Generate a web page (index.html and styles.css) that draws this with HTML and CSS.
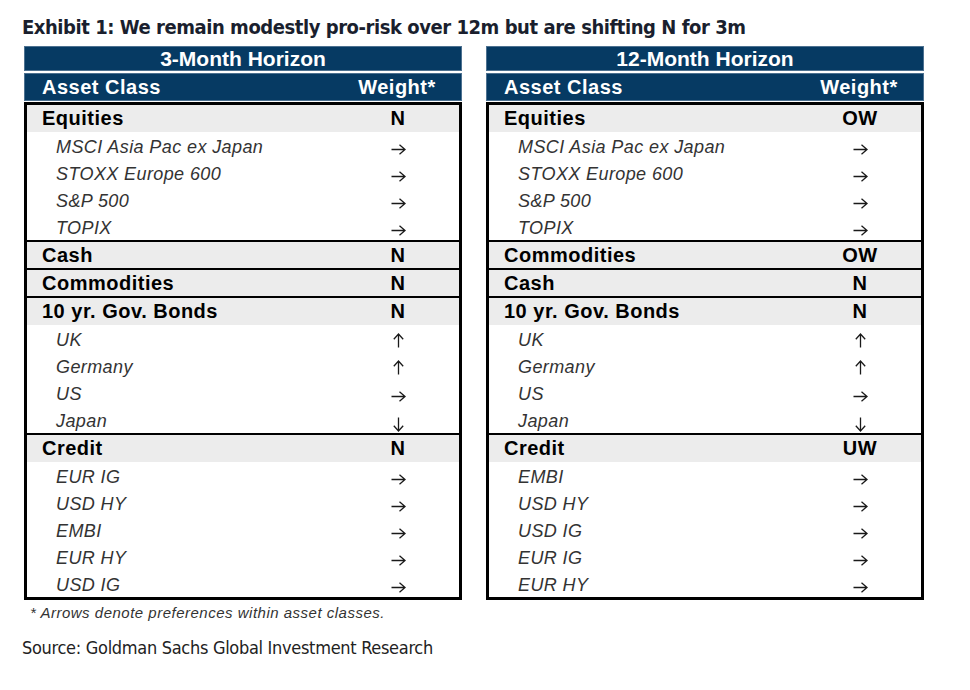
FILE: index.html
```html
<!DOCTYPE html>
<html lang="en">
<head>
<meta charset="utf-8">
<title>Exhibit 1</title>
<link rel="stylesheet" href="styles.css">
</head>
<body>
<svg class="defs" width="0" height="0" aria-hidden="true">
  <defs>
    <symbol id="ar" viewBox="0 0 15 11"><path d="M0.5 5.5H14M8.5 0.8L14 5.5L8.5 10.2" fill="none" stroke="#1a1a1a" stroke-width="1.3"/></symbol>
    <symbol id="au" viewBox="0 0 15 15"><path d="M7.5 14.5V1M2.8 6.2L7.5 1L12.2 6.2" fill="none" stroke="#1a1a1a" stroke-width="1.3"/></symbol>
    <symbol id="ad" viewBox="0 0 15 15"><path d="M7.5 0.5V14M2.8 8.8L7.5 14L12.2 8.8" fill="none" stroke="#1a1a1a" stroke-width="1.3"/></symbol>
  </defs>
</svg>
<div class="page">
  <h1 class="title">Exhibit 1: We remain modestly pro-risk over 12m but are shifting N for 3m</h1>
  <div class="tables">
    <section class="panel">
      <div class="horizon">3-Month Horizon</div>
      <div class="colhead"><span class="name">Asset Class</span><span class="w">Weight*</span></div>
      <div class="body">
        <div class="group">
          <div class="row head"><span class="name">Equities</span><span class="w">N</span></div>
          <div class="row sub"><span class="name">MSCI Asia Pac ex Japan</span><span class="w"><svg class="arr h"><use href="#ar"/></svg></span></div>
          <div class="row sub"><span class="name">STOXX Europe 600</span><span class="w"><svg class="arr h"><use href="#ar"/></svg></span></div>
          <div class="row sub"><span class="name">S&amp;P 500</span><span class="w"><svg class="arr h"><use href="#ar"/></svg></span></div>
          <div class="row sub"><span class="name">TOPIX</span><span class="w"><svg class="arr h"><use href="#ar"/></svg></span></div>
        </div>
        <div class="group">
          <div class="row head single"><span class="name">Cash</span><span class="w">N</span></div>
        </div>
        <div class="group">
          <div class="row head single"><span class="name">Commodities</span><span class="w">N</span></div>
        </div>
        <div class="group">
          <div class="row head"><span class="name">10 yr. Gov. Bonds</span><span class="w">N</span></div>
          <div class="row sub"><span class="name">UK</span><span class="w"><svg class="arr v"><use href="#au"/></svg></span></div>
          <div class="row sub"><span class="name">Germany</span><span class="w"><svg class="arr v"><use href="#au"/></svg></span></div>
          <div class="row sub"><span class="name">US</span><span class="w"><svg class="arr h"><use href="#ar"/></svg></span></div>
          <div class="row sub"><span class="name">Japan</span><span class="w"><svg class="arr v down"><use href="#ad"/></svg></span></div>
        </div>
        <div class="group">
          <div class="row head"><span class="name">Credit</span><span class="w">N</span></div>
          <div class="row sub"><span class="name">EUR IG</span><span class="w"><svg class="arr h"><use href="#ar"/></svg></span></div>
          <div class="row sub"><span class="name">USD HY</span><span class="w"><svg class="arr h"><use href="#ar"/></svg></span></div>
          <div class="row sub"><span class="name">EMBI</span><span class="w"><svg class="arr h"><use href="#ar"/></svg></span></div>
          <div class="row sub"><span class="name">EUR HY</span><span class="w"><svg class="arr h"><use href="#ar"/></svg></span></div>
          <div class="row sub"><span class="name">USD IG</span><span class="w"><svg class="arr h"><use href="#ar"/></svg></span></div>
        </div>
      </div>
      <p class="note">* Arrows denote preferences within asset classes.</p>
    </section>
    <section class="panel">
      <div class="horizon">12-Month Horizon</div>
      <div class="colhead"><span class="name">Asset Class</span><span class="w">Weight*</span></div>
      <div class="body">
        <div class="group">
          <div class="row head"><span class="name">Equities</span><span class="w">OW</span></div>
          <div class="row sub"><span class="name">MSCI Asia Pac ex Japan</span><span class="w"><svg class="arr h"><use href="#ar"/></svg></span></div>
          <div class="row sub"><span class="name">STOXX Europe 600</span><span class="w"><svg class="arr h"><use href="#ar"/></svg></span></div>
          <div class="row sub"><span class="name">S&amp;P 500</span><span class="w"><svg class="arr h"><use href="#ar"/></svg></span></div>
          <div class="row sub"><span class="name">TOPIX</span><span class="w"><svg class="arr h"><use href="#ar"/></svg></span></div>
        </div>
        <div class="group">
          <div class="row head single"><span class="name">Commodities</span><span class="w">OW</span></div>
        </div>
        <div class="group">
          <div class="row head single"><span class="name">Cash</span><span class="w">N</span></div>
        </div>
        <div class="group">
          <div class="row head"><span class="name">10 yr. Gov. Bonds</span><span class="w">N</span></div>
          <div class="row sub"><span class="name">UK</span><span class="w"><svg class="arr v"><use href="#au"/></svg></span></div>
          <div class="row sub"><span class="name">Germany</span><span class="w"><svg class="arr v"><use href="#au"/></svg></span></div>
          <div class="row sub"><span class="name">US</span><span class="w"><svg class="arr h"><use href="#ar"/></svg></span></div>
          <div class="row sub"><span class="name">Japan</span><span class="w"><svg class="arr v down"><use href="#ad"/></svg></span></div>
        </div>
        <div class="group">
          <div class="row head"><span class="name">Credit</span><span class="w">UW</span></div>
          <div class="row sub"><span class="name">EMBI</span><span class="w"><svg class="arr h"><use href="#ar"/></svg></span></div>
          <div class="row sub"><span class="name">USD HY</span><span class="w"><svg class="arr h"><use href="#ar"/></svg></span></div>
          <div class="row sub"><span class="name">USD IG</span><span class="w"><svg class="arr h"><use href="#ar"/></svg></span></div>
          <div class="row sub"><span class="name">EUR IG</span><span class="w"><svg class="arr h"><use href="#ar"/></svg></span></div>
          <div class="row sub"><span class="name">EUR HY</span><span class="w"><svg class="arr h"><use href="#ar"/></svg></span></div>
        </div>
      </div>
    </section>
  </div>
  <p class="source">Source: Goldman Sachs Global Investment Research</p>
</div>
</body>
</html>
```

FILE: styles.css
```css
* { box-sizing: border-box; }
html, body { margin: 0; padding: 0; background: #fff; }

.defs { position: absolute; width: 0; height: 0; overflow: hidden; }

.page {
  width: 970px;
  height: 690px;
  padding: 14px 0 0 22px;
  display: flex;
  flex-direction: column;
  font-family: "Liberation Sans", Arial, sans-serif;
}

.title {
  margin: 0 0 6px 0;
  font-family: "DejaVu Sans Condensed", sans-serif;
  font-weight: bold;
  font-size: 20px;
  letter-spacing: -0.45px;
  line-height: 26px;
  color: #1a1f2e;
  white-space: nowrap;
}

.tables {
  display: flex;
  gap: 24px;
  align-items: flex-start;
  padding-left: 2px;
}

.panel {
  width: 438px;
  display: flex;
  flex-direction: column;
}

.horizon {
  height: 25px;
  background: #063a63;
  border: 1px solid #4d7190;
  color: #fff;
  font-weight: bold;
  font-size: 21px;
  line-height: 23px;
  text-align: center;
  margin-bottom: 2px;
}

.colhead {
  height: 28px;
  background: #063a63;
  border: 1px solid #4d7190;
  color: #fff;
  font-weight: bold;
  font-size: 20px;
  letter-spacing: 0.5px;
  display: flex;
  align-items: center;
  margin-bottom: 1px;
}
.colhead .name { flex: 1; padding-left: 17px; }
.colhead .w { width: 128px; text-align: center; }

.body {
  border: 3px solid #000;
}

.group + .group { border-top: 2px solid #000; }

.row {
  display: flex;
  align-items: center;
  height: 27px;
}
.row .name { flex: 1; }
.row .w {
  width: 122px;
  display: flex;
  justify-content: center;
}

.row.head {
  background: #ececec;
  font-weight: bold;
  font-size: 20px;
  letter-spacing: 0.5px;
  color: #000;
}
.row.head .name { padding-left: 15px; }
.row.single { height: 26px; }

.row.sub {
  font-size: 18px;
  color: #333;
  padding-top: 3px;
}
.row.sub .name {
  font-style: italic;
  letter-spacing: 0.4px;
  padding-left: 29px;
}

.arr { display: block; }
.arr.h { width: 15px; height: 11px; margin-top: 4px; }
.arr.v { width: 15px; height: 15px; margin-top: 1px; }
.arr.v.down { margin-top: 6px; }

.note {
  margin: 5px 0 0 6px;
  font-style: italic;
  font-size: 15px;
  line-height: 16px;
  letter-spacing: 0.5px;
  color: #333;
}

.source {
  margin: 16px 0 0 0;
  font-family: "DejaVu Sans Condensed", sans-serif;
  font-size: 18px;
  letter-spacing: -0.3px;
  line-height: 22px;
  color: #222;
}
```
